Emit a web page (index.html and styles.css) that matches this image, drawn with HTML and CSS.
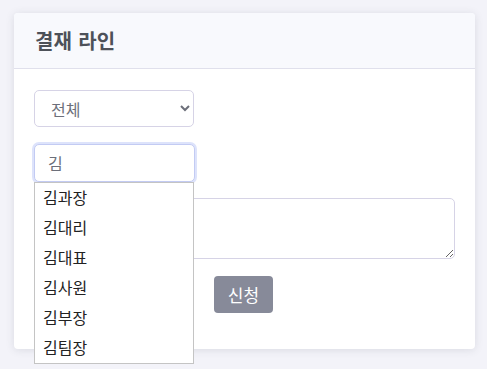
FILE: index.html
```html
<!DOCTYPE html>
<html>
<head>
  <meta name="viewport" content="width=device-width, initial-scale=1">
  <title>결재 라인</title>
  <link rel="stylesheet" href="styles.css">
</head>
<body>
  <div class="card">
    <div class="card-header">
      <h4>결재 라인</h4>
    </div>
    <div class="card-body">
      <select class="form-select">
        <option>전체</option>
      </select>
      <div class="search">
        <input class="form-control" type="text" value="김">
        <ul class="suggest">
          <li>김과장</li>
          <li>김대리</li>
          <li>김대표</li>
          <li>김사원</li>
          <li>김부장</li>
          <li>김팀장</li>
        </ul>
      </div>
      <textarea class="memo"></textarea>
      <div class="actions">
        <button class="btn">신청</button>
      </div>
    </div>
  </div>
</body>
</html>
```

FILE: styles.css
```css
body {
  margin: 0;
  padding: 13px 12px 20px 14px;
  background: #f3f3f9;
  font-family: "Noto Sans CJK KR", "Noto Sans", sans-serif;
  color: #495057;
}
.card {
  background: #fff;
  border-radius: 4px;
  box-shadow: 0 1px 8px rgba(56, 65, 74, 0.13);
}
.card-header {
  height: 56px;
  box-sizing: border-box;
  padding: 0 21px;
  display: flex;
  align-items: center;
  background: #f8f9fd;
  border-bottom: 1px solid #e0e0ec;
  border-radius: 4px 4px 0 0;
}
.card-header h4 {
  margin: 0;
  font-size: 20px;
  font-weight: 700;
  word-spacing: 2px;
  color: #4d5159;
}
.card-body {
  padding: 21px 20px 36px;
  display: flex;
  flex-direction: column;
}
.form-select {
  width: 160px;
  height: 37px;
  padding: 0 12px;
  border: 1px solid #d6d3e6;
  border-radius: 5px;
  background: #fff;
  font: inherit;
  font-size: 16px;
  color: #6c6f7a;
}
.search {
  position: relative;
  margin-top: 17px;
  width: 161px;
}
.form-control {
  width: 100%;
  height: 38px;
  box-sizing: border-box;
  padding: 0 13px;
  border: 1px solid #c3cbf3;
  border-radius: 5px;
  box-shadow: 0 0 0 2px #dde3fb;
  outline: none;
  font: inherit;
  font-size: 16px;
  color: #6c6f7a;
}
.suggest {
  position: absolute;
  left: 0;
  top: 38px;
  width: 160px;
  box-sizing: border-box;
  margin: 0;
  padding: 0;
  list-style: none;
  background: #fff;
  border: 1px solid #c4c4c4;
  z-index: 2;
}
.suggest li {
  height: 30px;
  line-height: 28px;
  padding: 0 8px;
  font-size: 16px;
  color: #222;
}
.memo {
  margin-top: 16px;
  height: 61px;
  box-sizing: border-box;
  border: 1px solid #d6d3e6;
  border-radius: 5px;
  font: inherit;
}
.actions {
  margin-top: 17px;
  display: flex;
  justify-content: center;
}
.btn {
  height: 37px;
  padding: 0 14px;
  border: none;
  border-radius: 4px;
  background: #878a99;
  color: #fff;
  font: inherit;
  font-size: 17px;
  margin-right: 2px;
}
```
